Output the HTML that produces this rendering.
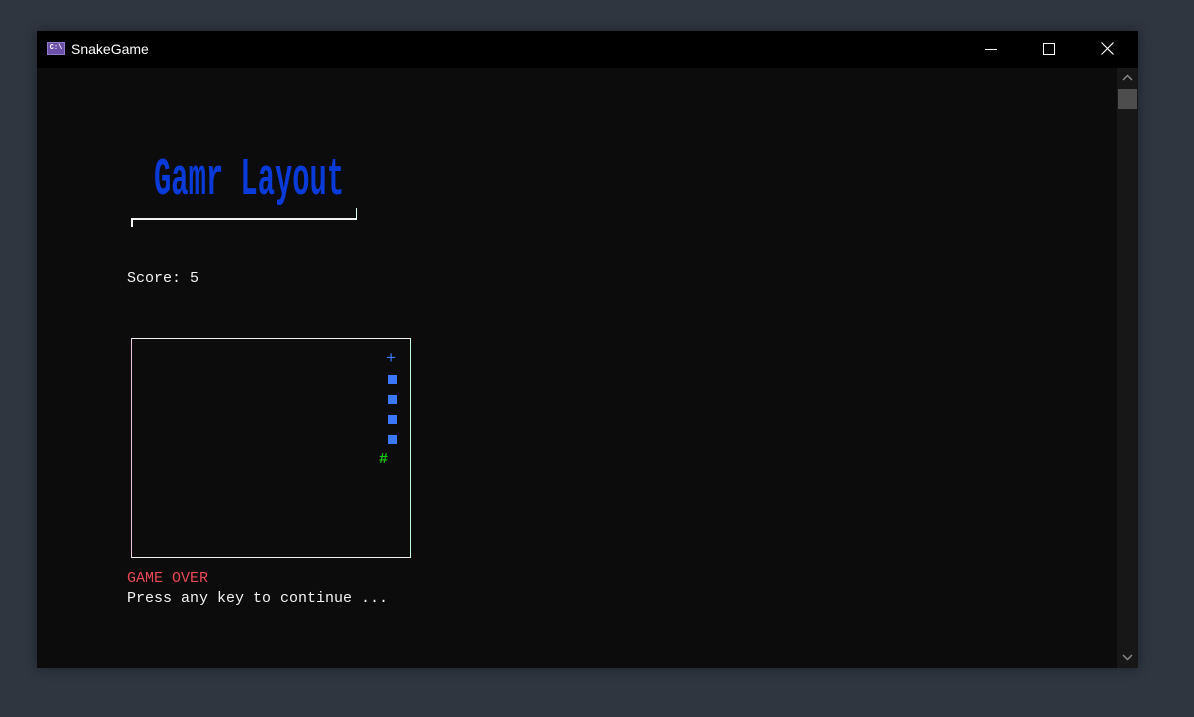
<!DOCTYPE html>
<html><head><meta charset="utf-8"><style>
html,body{margin:0;padding:0;width:1194px;height:717px;background:#2f3640;overflow:hidden}
.win{position:absolute;left:37px;top:31px;width:1101px;height:637px;background:#0c0c0c;box-shadow:0 0 12px rgba(0,0,0,.4)}
.tb{position:absolute;left:0;top:0;width:1101px;height:37px;background:#000}
.ttl{position:absolute;left:34px;top:10px;color:#fff;font:14px "Liberation Sans",sans-serif}
.ico{position:absolute;left:10px;top:11px;width:18px;height:13px;background:#6b4fa8;border:1px solid #8f7ac8;box-sizing:border-box;color:#fff;font:bold 7px "Liberation Mono",monospace;line-height:11px;text-align:center}
.t{position:absolute;color:#f2f2f2;font:15px "Liberation Mono",monospace;white-space:pre;line-height:20px}
.sb{position:absolute;left:1080px;top:37px;width:21px;height:600px;background:#171717}
.thumb{position:absolute;left:1081px;top:58px;width:19px;height:20px;background:#4d4d4d}
.sq{position:absolute;width:9px;height:9px;background:#3b78ff}
</style></head><body>
<div class="win">
 <div class="tb">
  <div class="ico">C:\</div>
  <div class="ttl">SnakeGame</div>
  <div style="position:absolute;left:948px;top:18px;width:12px;height:1px;background:#fff"></div>
  <div style="position:absolute;left:1006px;top:12px;width:10px;height:10px;border:1px solid #fff"></div>
  <svg style="position:absolute;left:1064px;top:11px" width="13" height="13"><path d="M0.5 0.5L12.5 12.5M12.5 0.5L0.5 12.5" stroke="#fff" stroke-width="1.2"/></svg>
 </div>
 <div class="sb"></div>
 <svg style="position:absolute;left:1085px;top:43px" width="11" height="8"><path d="M1 6L5.5 1.5L10 6" stroke="#888" stroke-width="1.5" fill="none"/></svg>
 <div class="thumb"></div>
 <svg style="position:absolute;left:1085px;top:622px" width="11" height="8"><path d="M1 2L5.5 6.5L10 2" stroke="#888" stroke-width="1.5" fill="none"/></svg>

 <div style="position:absolute;left:117px;top:121px;color:#0a3ad8;font:bold 30px 'Liberation Mono',monospace;transform:scale(0.96,1.75);transform-origin:0 0;white-space:pre">Gamr Layout</div>
 <div style="position:absolute;left:94px;top:187px;width:226px;height:2px;background:#f2f2f2"></div>
 <div style="position:absolute;left:94px;top:187px;width:2px;height:9px;background:#f2f2f2"></div>
 <div style="position:absolute;left:319px;top:177px;width:1px;height:11px;background:#e0fff0"></div>

 <div class="t" style="left:90px;top:238px">Score: 5</div>

 <div style="position:absolute;left:94px;top:307px;width:278px;height:218px;border:1px solid #f2f2f2;border-left-color:#f0c8e0;border-right-color:#c8ffe0"></div>
 <div class="t" style="left:349px;top:319px;color:#3b78ff;font-size:17px">+</div>
 <div class="sq" style="left:351px;top:344px"></div>
 <div class="sq" style="left:351px;top:364px"></div>
 <div class="sq" style="left:351px;top:384px"></div>
 <div class="sq" style="left:351px;top:404px"></div>
 <div class="t" style="left:342px;top:419px;color:#16c60c;font-weight:bold">#</div>

 <div class="t" style="left:90px;top:538px;color:#e74856">GAME OVER</div>
 <div class="t" style="left:90px;top:558px">Press any key to continue ...</div>
</div>
</body></html>
